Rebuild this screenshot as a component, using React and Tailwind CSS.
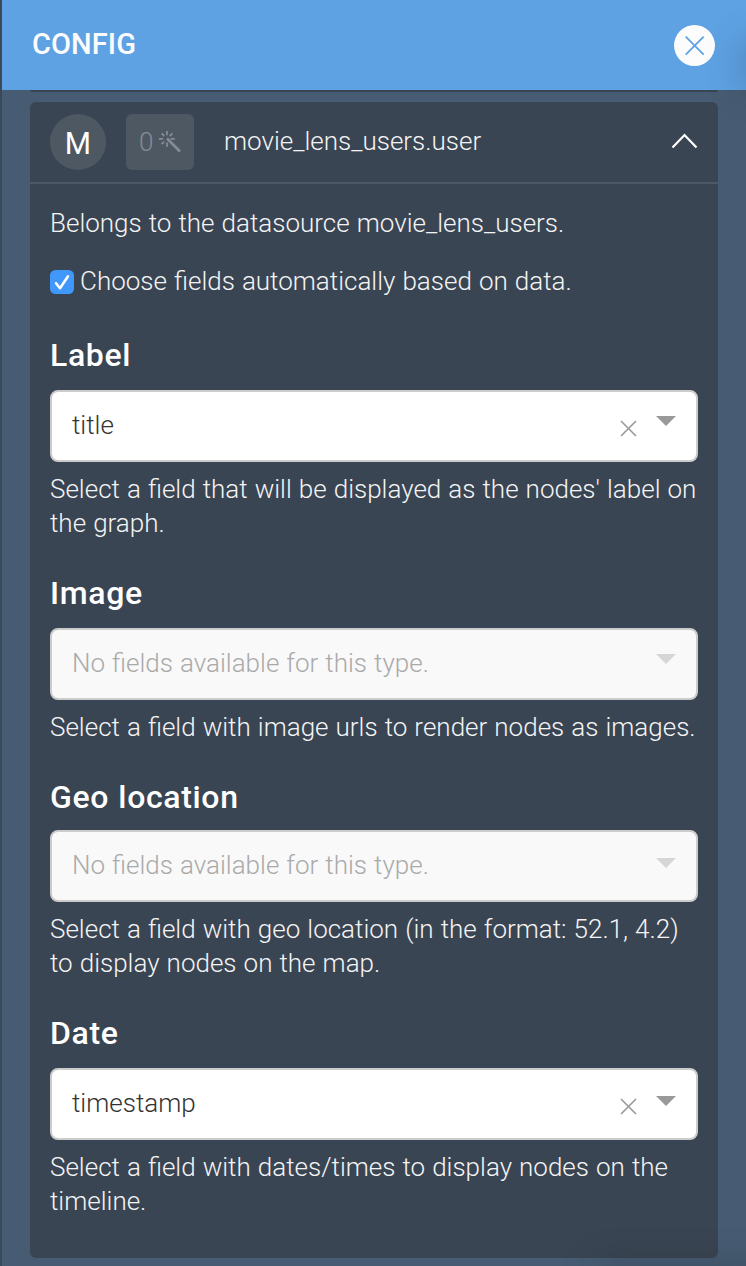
import React from "react";

const fields = [
  {
    title: "Label",
    value: "title",
    help: ["Select a field that will be displayed as the nodes' label on", "the graph."],
    gap: "mt-[15px]",
    arrow: "top-[24px]",
  },
  {
    title: "Image",
    help: ["Select a field with image urls to render nodes as images."],
    gap: "mt-[15px]",
    arrow: "top-[24px]",
  },
  {
    title: "Geo location",
    help: ["Select a field with geo location (in the format: 52.1, 4.2)", "to display nodes on the map."],
    gap: "mt-[13px]",
    arrow: "top-[26px]",
  },
  {
    title: "Date",
    value: "timestamp",
    help: ["Select a field with dates/times to display nodes on the", "timeline."],
    gap: "mt-[15px]",
    arrow: "top-[26px]",
  },
];

function Select({ value, gap, arrow }) {
  return (
    <div
      className={`${gap} relative flex h-[72px] items-center rounded-[8px] border-2 border-[#cccccc] pb-[2px] pl-5 ${
        value ? "bg-white text-[#333333]" : "bg-[#f9f9f9] text-[#aaaaaa]"
      }`}
    >
      <span>{value || "No fields available for this type."}</span>
      {value && (
        <svg className="absolute top-[28px] left-[568px] h-[17px] w-[17px]" viewBox="0 0 17 17" stroke="#999" strokeWidth="1.6">
          <path d="M1 1l15 15M16 1L1 16" />
        </svg>
      )}
      <svg className={`absolute ${arrow} left-[604px] h-[10px] w-5`} viewBox="0 0 20 10">
        <path d="M0 0h20L10 10z" fill={value ? "#999" : "#d6d6d6"} />
      </svg>
    </div>
  );
}

function Field({ title, help, ...select }) {
  return (
    <section className="mb-[33px]">
      <h2 className="h-10 text-[32px] leading-10 font-medium tracking-[0.65px] text-white">{title}</h2>
      <Select {...select} />
      <div className="mt-[10px]">
        {help.map((line) => (
          <p key={line} className="whitespace-nowrap">{line}</p>
        ))}
      </div>
    </section>
  );
}

export default function App() {
  return (
    <div className="relative h-[1266px] w-[746px] overflow-hidden border-l-2 border-[#3a4a5b] bg-[#475c73] font-['Roboto',sans-serif] text-[26px] leading-[34px] font-light text-[#f4f4f4] [word-spacing:0.7px]">
      <header className="flex h-[90px] items-center justify-between bg-[#5ea2e4] pr-[31px] pl-[30px]">
        <h1 className="mb-[2px] text-[29px] font-medium tracking-[0.1px] text-[#fcfcfc]">CONFIG</h1>
        <svg className="h-[41px] w-[41px]" viewBox="0 0 41 41">
          <circle cx="20.5" cy="20.5" r="20.5" fill="#fcfcfc" />
          <path d="M11.7 11.7l18 18M29.7 11.7l-18 18" stroke="#5ea2e4" strokeWidth="1.8" />
        </svg>
      </header>
      <div className="mx-7 h-[2px] rounded-b-[3px] bg-[#3a4553]" />
      <main className="mx-7 mt-[10px] h-[1156px] rounded-[6px] bg-[#3a4553]">
        <div className="flex h-[82px] items-center border-b-2 border-[#4b5866] pl-5">
          <div className="flex h-14 w-14 items-center justify-center rounded-full bg-[#4e5863] pt-[2px] text-[32px] font-normal text-white">
            <span className="scale-x-[0.94]">M</span>
          </div>
          <div className="ml-5 flex h-14 w-[68px] items-center rounded-[6px] bg-[#4e5863] pl-[13px] text-[#858c95]">
            <span className="w-[20px]">0</span>
            <svg className="h-[22px] w-[22px]" viewBox="0 0 22 22" stroke="#858c95">
              <path d="M8 7.5L21 20.5" strokeWidth="2.6" />
              <path
                d="M8 0v4.2M8 11.6v4.2M0 7.8h4.2M11.6 7.8h4.2M2.6 2.4l2.6 2.6M13.4 2.4l-2.6 2.6M2.6 13.2l2.6-2.6"
                strokeWidth="1.8"
              />
            </svg>
          </div>
          <span className="mb-[2px] ml-[30px]">movie_lens_users.user</span>
          <svg className="mr-5 mb-[2px] ml-auto h-[18px] w-[27px]" viewBox="0 0 27 18" fill="none" stroke="#fff" strokeWidth="2.2">
            <path d="M1.5 15.5L13.5 3l12 12.5" />
          </svg>
        </div>
        <div className="px-5 pt-[22px]">
          <p>Belongs to the datasource movie_lens_users.</p>
          <label className="mt-6 mb-[37px] flex items-center">
            <input type="checkbox" defaultChecked className="peer sr-only" />
            <svg className="mt-[2px] mr-[6px] h-6 w-6" viewBox="0 0 24 24" fill="none">
              <rect width="24" height="24" rx="5.5" fill="#3f98fa" />
              <path d="M6 13.2l4 5L18 6.3" stroke="#fff" strokeWidth="2.6" strokeLinecap="round" strokeLinejoin="round" />
            </svg>
            <span>Choose fields automatically based on data.</span>
          </label>
          {fields.map((f) => (
            <Field key={f.title} {...f} />
          ))}
        </div>
      </main>
      <div className="pointer-events-none absolute top-[45px] -right-[30px] h-[40px] w-[30px] shadow-[0_0_40px_rgba(0,0,0,0.3)]" />
      <div className="pointer-events-none absolute -right-[30px] -bottom-[30px] h-[30px] w-[180px] shadow-[0_0_40px_rgba(0,0,0,0.2)]" />
    </div>
  );
}
